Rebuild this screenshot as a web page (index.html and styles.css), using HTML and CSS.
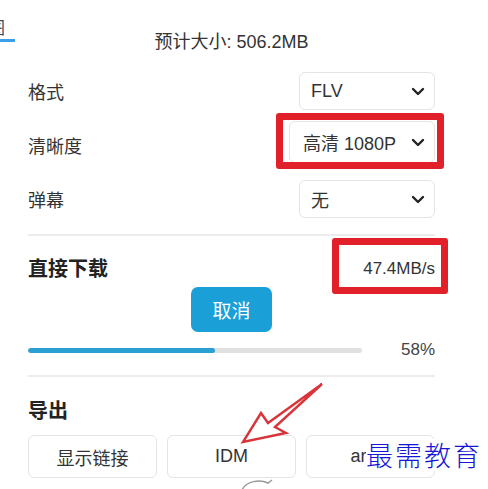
FILE: index.html
```html
<!DOCTYPE html>
<html lang="zh-CN">
<head>
  <meta charset="UTF-8">
  <meta name="viewport" content="width=device-width, initial-scale=1.0">
  <title>下载</title>
  <link rel="stylesheet" href="styles.css">
</head>
<body>
  <a class="crumb" href="#">图</a>

  <div class="panel">
    <p class="size">预计大小: 506.2MB</p>

    <div class="field field-format">
      <span class="label">格式</span>
      <div class="select">
        <span>FLV</span>
        <svg class="chevron" width="14" height="9" viewBox="0 0 14 9"><path d="M2 2l5 5 5-5" fill="none" stroke="#222" stroke-width="2.4" stroke-linecap="round" stroke-linejoin="round"/></svg>
      </div>
    </div>

    <div class="field field-quality">
      <span class="label">清晰度</span>
      <div class="select select-wide">
        <span>高清 1080P</span>
        <svg class="chevron" width="14" height="9" viewBox="0 0 14 9"><path d="M2 2l5 5 5-5" fill="none" stroke="#222" stroke-width="2.4" stroke-linecap="round" stroke-linejoin="round"/></svg>
      </div>
    </div>

    <div class="field field-danmaku">
      <span class="label">弹幕</span>
      <div class="select">
        <span>无</span>
        <svg class="chevron" width="14" height="9" viewBox="0 0 14 9"><path d="M2 2l5 5 5-5" fill="none" stroke="#222" stroke-width="2.4" stroke-linecap="round" stroke-linejoin="round"/></svg>
      </div>
    </div>

    <hr class="divider">

    <div class="section-head head-download">
      <h2>直接下载</h2>
      <span class="speed">47.4MB/s</span>
    </div>

    <button class="cancel" type="button">取消</button>

    <div class="progress">
      <div class="bar"><div class="fill" style="width: 56%;"></div></div>
      <span class="percent">58%</span>
    </div>

    <hr class="divider divider-export">

    <div class="section-head head-export">
      <h2>导出</h2>
    </div>

    <div class="exports">
      <button type="button">显示链接</button>
      <button type="button">IDM</button>
      <button type="button">aria2</button>
    </div>
  </div>

  <!-- annotations on top of the screenshot -->
  <div class="mark mark-quality"></div>
  <div class="mark mark-speed"></div>

  <svg class="arrow" width="90" height="70" viewBox="236 378 90 70">
    <path d="M322 384 L268 423 L261 413 L243 442 L286 433 L275 427 L322 384" fill="#fff" stroke="#d8343a" stroke-width="2.4" stroke-linejoin="miter"/>
  </svg>

  <svg class="cursor" width="40" height="12" viewBox="0 0 40 12">
    <path d="M4 12 C8 3 22 1 30 5 L34 2" fill="none" stroke="#9a9a9a" stroke-width="1.5"/>
  </svg>

  <div class="watermark">最需教育</div>
</body>
</html>
```

FILE: styles.css
```css
/* Reset */
* {
  margin: 0;
  padding: 0;
  box-sizing: border-box;
}

body {
  width: 488px;
  height: 489px;
  overflow: hidden;
  position: relative;
  background: #fff;
  color: #333;
  font-family: 'Liberation Sans', 'Noto Sans CJK SC', sans-serif;
  font-size: 16px;
}

/* link of the page behind the popup */
.crumb {
  position: absolute;
  left: 0;
  top: 19px;
  width: 15px;
  height: 23px;
  overflow: hidden;
  border-bottom: 3px solid #3d9fea;
  color: #3a4a5a;
  text-decoration: none;
  font-size: 17px;
  line-height: 20px;
  text-indent: -12px;
}

/* Panel */
.panel {
  padding: 0 53px 0 28px;
}

.size {
  margin-top: 31px;
  line-height: 22px;
  text-align: center;
  font-size: 18px;
  color: #333;
}

.field {
  display: flex;
  justify-content: space-between;
  align-items: center;
}

.field-format {
  margin-top: 19px;
}

.field-quality {
  margin-top: 11px;
}

.field-quality .label {
  padding-top: 6px;
}

.field-danmaku {
  margin-top: 17px;
}

.label {
  font-size: 18px;
  color: #333;
}

.select {
  display: flex;
  align-items: center;
  justify-content: space-between;
  width: 136px;
  height: 38px;
  padding: 0 9px 0 11px;
  border: 1px solid #e4e4e4;
  border-radius: 6px;
  background: #fff;
  font-size: 18px;
  color: #333;
}

.select-wide {
  width: 146px;
  height: 42px;
  padding-left: 13px;
}

.chevron {
  display: block;
}

.divider {
  margin-top: 16px;
  border: none;
  border-top: 2px solid #ececec;
}

.section-head {
  display: flex;
  justify-content: space-between;
  align-items: center;
}

.section-head h2 {
  font-size: 20px;
  font-weight: bold;
  color: #222;
}

.head-download {
  margin-top: 13px;
  height: 36px;
}

.speed {
  font-size: 17px;
  color: #333;
  padding-top: 4px;
}

.cancel {
  display: block;
  margin: 2px auto 0;
  width: 81px;
  height: 45px;
  border: none;
  border-radius: 7px;
  background: #1a9fd7;
  color: #fff;
  font-family: inherit;
  font-size: 19px;
}

.progress {
  display: flex;
  justify-content: space-between;
  align-items: center;
  margin-top: 8px;
  height: 20px;
}

.bar {
  width: 334px;
  height: 5px;
  border-radius: 3px;
  background: #e0e0e0;
  overflow: hidden;
}

.fill {
  height: 100%;
  border-radius: 3px;
  background: #2a9fd2;
}

.percent {
  font-size: 17px;
  color: #444;
}

.divider-export {
  margin-top: 15px;
}

.head-export {
  margin-top: 17px;
  height: 30px;
}

.exports {
  display: grid;
  grid-template-columns: repeat(3, 1fr);
  gap: 10px;
  margin-top: 11px;
}

.exports button {
  height: 43px;
  border: 1px solid #e4e4e4;
  border-radius: 6px;
  background: #fff;
  color: #333;
  font-family: inherit;
  font-size: 18px;
}

/* Annotations */
.mark {
  position: absolute;
  border: 7px solid #e2202a;
  border-radius: 3px;
}

.mark-quality {
  left: 276px;
  top: 113px;
  width: 168px;
  height: 56px;
}

.mark-speed {
  left: 332px;
  top: 238px;
  width: 116px;
  height: 56px;
}

.arrow {
  position: absolute;
  left: 236px;
  top: 378px;
}

.cursor {
  position: absolute;
  left: 238px;
  top: 478px;
}

.watermark {
  position: absolute;
  left: 366px;
  top: 439px;
  padding-right: 2px;
  background: #fff;
  color: #1616d6;
  font-family: 'Noto Sans CJK SC', sans-serif;
  font-size: 27px;
  font-weight: 300;
  letter-spacing: 2px;
  line-height: 32px;
  white-space: nowrap;
}
```
